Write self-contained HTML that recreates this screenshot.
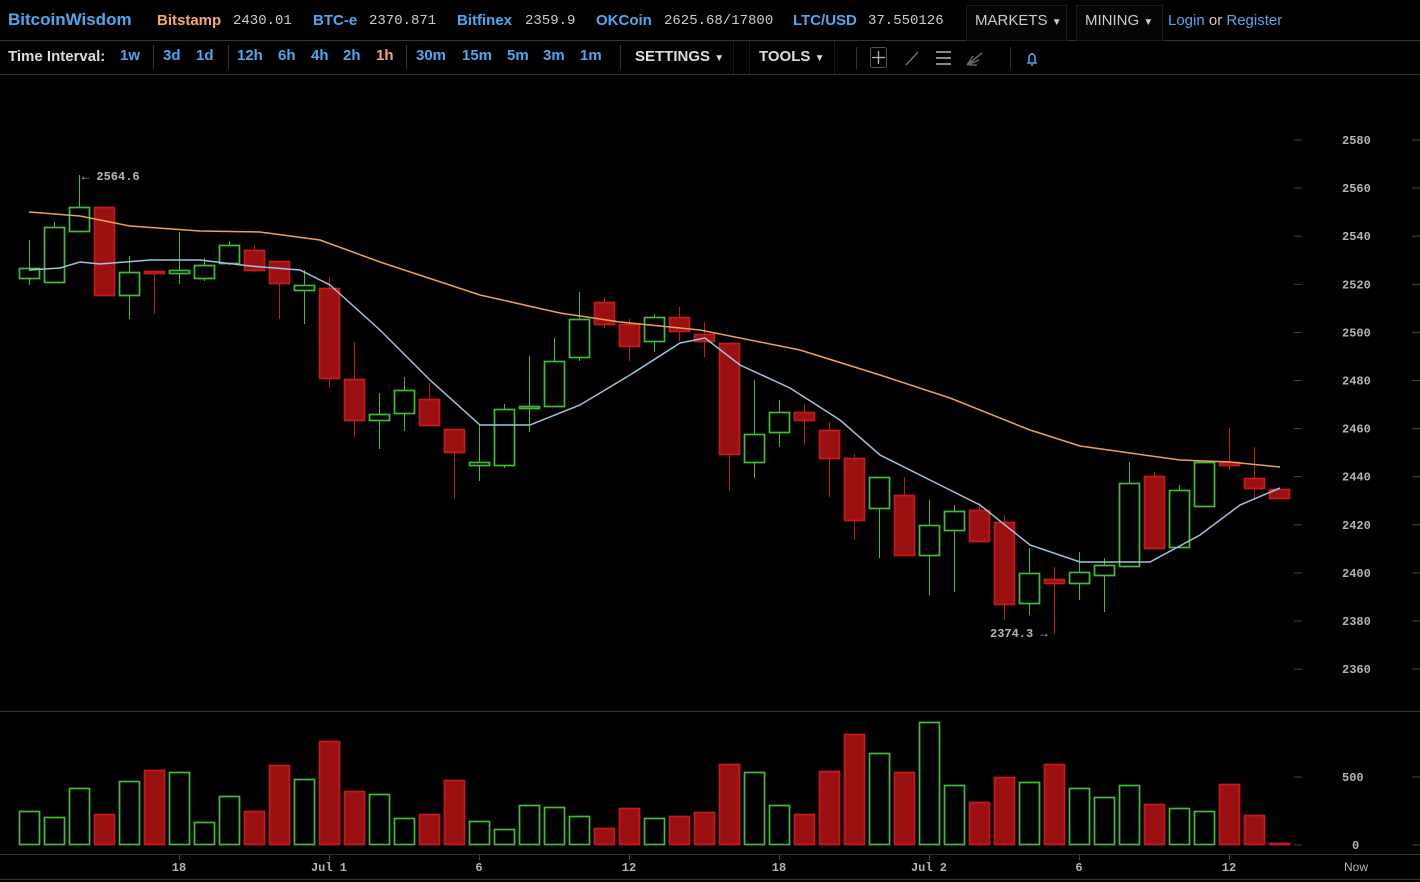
<!DOCTYPE html>
<html><head><meta charset="utf-8"><style>
*{margin:0;padding:0;box-sizing:border-box}
body{width:1420px;height:882px;background:#000;overflow:hidden;font-family:"Liberation Sans",sans-serif;color:#ddd;position:relative}
.hdr{position:absolute;left:0;top:0;width:1420px;height:41px;border-bottom:1px solid #333}
.t{position:absolute;white-space:nowrap}
.b{color:#4fa8ee;font-weight:bold;font-size:15px}
.m{font-family:"Liberation Mono",monospace;font-size:14px;color:#ccc}
.bar{position:absolute;left:0;top:41px;width:1420px;height:34px;border-bottom:1px solid #333}
.ti{font-weight:bold;font-size:15px;color:#4fa8ee;top:47px}
.sep{position:absolute;width:1px;background:#333}
.menu{position:absolute;border:1px solid #1a1a1a;background:#050505}
</style></head><body>
<div class="hdr"></div>
<div class="t b" style="left:8px;top:10px;font-size:17px">BitcoinWisdom</div>
<div class="t b" style="left:157px;top:12px;color:#f2a96a">Bitstamp</div>
<div class="t m" style="left:233px;top:13px">2430.01</div>
<div class="t b" style="left:313px;top:12px">BTC-e</div>
<div class="t m" style="left:369px;top:13px">2370.871</div>
<div class="t b" style="left:457px;top:12px">Bitfinex</div>
<div class="t m" style="left:525px;top:13px">2359.9</div>
<div class="t b" style="left:596px;top:12px">OKCoin</div>
<div class="t m" style="left:664px;top:13px">2625.68/17800</div>
<div class="t b" style="left:793px;top:12px">LTC/USD</div>
<div class="t m" style="left:868px;top:13px">37.550126</div>
<div class="menu" style="left:966px;top:5px;width:101px;height:36px"></div>
<div class="menu" style="left:1076px;top:5px;width:87px;height:36px"></div>
<div class="t" style="left:975px;top:12px;font-size:15px;color:#ccc">MARKETS <span style="font-size:10px">▼</span></div>
<div class="t" style="left:1085px;top:12px;font-size:15px;color:#ccc">MINING <span style="font-size:10px">▼</span></div>
<div class="t" style="left:1168px;top:12px;font-size:15px;color:#4fa8ee">Login <span style="color:#ccc">or</span> Register</div>
<div class="bar"></div>
<div class="t" style="left:8px;top:48px;font-size:15px;font-weight:bold;color:#ddd">Time Interval:</div>
<div class="t ti" style="left:120px">1w</div>
<div class="sep" style="left:153px;top:45px;height:24px"></div>
<div class="t ti" style="left:163px">3d</div>
<div class="t ti" style="left:196px">1d</div>
<div class="sep" style="left:228px;top:45px;height:24px"></div>
<div class="t ti" style="left:237px">12h</div>
<div class="t ti" style="left:278px">6h</div>
<div class="t ti" style="left:311px">4h</div>
<div class="t ti" style="left:343px">2h</div>
<div class="t ti" style="left:376px;color:#f2a96a">1h</div>
<div class="sep" style="left:406px;top:45px;height:24px"></div>
<div class="t ti" style="left:416px">30m</div>
<div class="t ti" style="left:462px">15m</div>
<div class="t ti" style="left:507px">5m</div>
<div class="t ti" style="left:543px">3m</div>
<div class="t ti" style="left:580px">1m</div>
<div class="sep" style="left:620px;top:45px;height:24px"></div>
<div class="t" style="left:635px;top:48px;font-size:15px;font-weight:bold;color:#ddd">SETTINGS <span style="font-size:10px">▼</span></div>
<div class="sep" style="left:733px;top:41px;height:33px;background:#1a1a1a"></div>
<div class="sep" style="left:749px;top:41px;height:33px;background:#1a1a1a"></div>
<div class="t" style="left:759px;top:48px;font-size:15px;font-weight:bold;color:#ddd">TOOLS <span style="font-size:10px">▼</span></div>
<div class="sep" style="left:834px;top:41px;height:33px;background:#1a1a1a"></div>
<div class="sep" style="left:856px;top:47px;height:22px"></div>
<svg style="position:absolute;left:860px;top:44px" width="190" height="28">
<rect x="10.5" y="3.5" width="16" height="20" rx="2" fill="none" stroke="#555"/>
<path d="M18.5 7v13M12 13.5h13" stroke="#bbb" stroke-width="1.3"/>
<path d="M46 21l12-13" stroke="#777" stroke-width="1.3"/>
<path d="M76 8h15M76 14h15M76 20h15" stroke="#888" stroke-width="2"/>
<path d="M107 21l15-12M107 21l12-5M107 21l6-9M109 21h8" stroke="#666" stroke-width="1.5"/>
<path d="M167 19h10M169 19v-6a3 3 0 016 0v6M172 9v1M171 21h2" stroke="#4fa8ee" stroke-width="1.5" fill="none"/>
</svg>
<div class="sep" style="left:1010px;top:47px;height:22px"></div>
<svg id="c" style="position:absolute;left:0;top:75px" width="1420" height="807"></svg>
<script>
var C=[[268,278,240,285,1],[282,227,222,282,1],[231,207,175,231,1],[207,295,207,295,0],[295,272,256,319,1],[271,273,271,314,0],[273,270,232,284,1],[278,265,258,281,1],[263,245,241,265,1],[250,270,245,272,0],[261,283,261,319,0],[290,285,270,324,1],[288,378,277,388,0],[379,420,342,437,0],[420,414,393,449,1],[413,390,377,431,1],[399,425,383,425,0],[429,452,429,499,0],[465,462,424,481,1],[465,409,404,468,1],[408,406,356,432,1],[406,361,338,406,1],[357,319,292,361,1],[302,324,297,328,0],[324,346,319,361,0],[341,317,314,352,1],[317,331,307,341,0],[334,341,322,357,0],[343,454,343,491,0],[462,434,380,478,1],[432,412,400,447,1],[412,420,404,445,0],[430,458,422,497,0],[458,520,454,540,0],[508,477,477,558,1],[495,555,477,555,0],[555,525,500,595,1],[530,511,505,592,1],[510,541,503,541,0],[522,604,515,620,0],[603,573,548,615,1],[579,583,567,634,0],[583,572,552,600,1],[575,565,558,612,1],[566,483,462,566,1],[476,548,472,548,0],[547,490,485,548,1],[506,462,462,506,1],[462,465,428,470,0],[478,488,447,500,0],[489,498,489,498,0]];
var V=[811,817,788,814,781,770,772,822,796,811,765,779,741,791,794,818,814,780,821,829,805,807,816,828,808,818,816,812,764,772,805,814,771,734,753,772,722,785,802,777,782,764,788,797,785,804,808,811,784,815,843];
var G="#43bd37",R="#c81a1a",RF="#9b1111",s="",O=-75;
function L(x1,y1,x2,y2,c){s+='<line x1="'+x1+'" y1="'+(y1+O)+'" x2="'+x2+'" y2="'+(y2+O)+'" stroke="'+c+'" stroke-width="1"/>'}
function T(x,y,t,a){s+='<text x="'+x+'" y="'+(y+O)+'" fill="#b4b4b4" font-family="Liberation Mono,monospace" font-size="12" font-weight="bold" text-anchor="'+(a||"start")+'">'+t+'</text>'}
L(0,711.5,1420,711.5,"#333");L(0,854.5,1420,854.5,"#333");L(0,879.5,1420,879.5,"#333");
for(var p=2580,i=0;p>=2360;p-=20,i++){var y=140+i*48.1;L(1294,y,1302,y,"#444");L(1412,y,1420,y,"#444");T(1342,y+4,p)}
L(1294,777,1302,777,"#444");L(1412,777,1420,777,"#444");T(1342,781,"500");
L(1294,845,1302,845,"#444");L(1412,845,1420,845,"#444");T(1352,849,"0");
var bl=[[179,"18"],[329,"Jul 1"],[479,"6"],[629,"12"],[779,"18"],[929,"Jul 2"],[1079,"6"],[1229,"12"]];
bl.forEach(function(b){L(b[0]+.5,855,b[0]+.5,860,"#444");s+='<text x="'+b[0]+'" y="'+(871+O)+'" fill="#b4b4b4" font-family="Liberation Mono,monospace" font-size="12" font-weight="bold" text-anchor="middle">'+b[1]+'</text>'});
s+='<text x="1356" y="'+(871+O)+'" fill="#b4b4b4" font-family="Liberation Sans,sans-serif" font-size="12" text-anchor="middle">Now</text>';
C.forEach(function(c,i){var x=29+25*i,g=c[4],t=Math.min(c[0],c[1]),h=Math.max(Math.abs(c[0]-c[1]),2),col=g?G:R;
L(x+.5,c[2],x+.5,c[3],col);
s+='<rect x="'+(x-9.5)+'" y="'+(t+O+.5)+'" width="20" height="'+h+'" fill="'+(g?"#000":RF)+'" stroke="'+col+'" stroke-width="1.7"/>';
var v=V[i];s+='<rect x="'+(x-9.5)+'" y="'+(v+O+.5)+'" width="20" height="'+(844-v)+'" fill="'+(g?"#000":RF)+'" stroke="'+col+'" stroke-width="1.7"/>';});
function P(pts,c){s+='<polyline fill="none" stroke="'+c+'" stroke-width="1.5" points="'+pts.map(function(p){return p[0]+","+(p[1]+O)}).join(" ")+'"/>'}
P([[29,212],[80,216],[130,226],[200,231],[260,232],[320,240],[380,262],[480,295],[560,313],[620,322],[700,330],[800,350],[880,375],[950,398],[1030,430],[1080,446],[1130,453],[1180,460],[1230,462],[1280,467]],"#e9a25a");
P([[29,270],[60,268],[80,262],[100,264],[150,260],[200,260],[250,266],[300,270],[330,285],[380,330],[430,380],[480,425],[530,425],[580,405],[630,375],[680,343],[705,338],[740,365],[790,388],[840,420],[880,455],[930,480],[980,505],[1030,545],[1080,562],[1150,562],[1200,535],[1240,505],[1280,488]],"#9ec3dc");
T(82,180,"← 2564.6");T(990,637,"2374.3 →");
document.getElementById("c").innerHTML=s;
</script>
</body></html>
